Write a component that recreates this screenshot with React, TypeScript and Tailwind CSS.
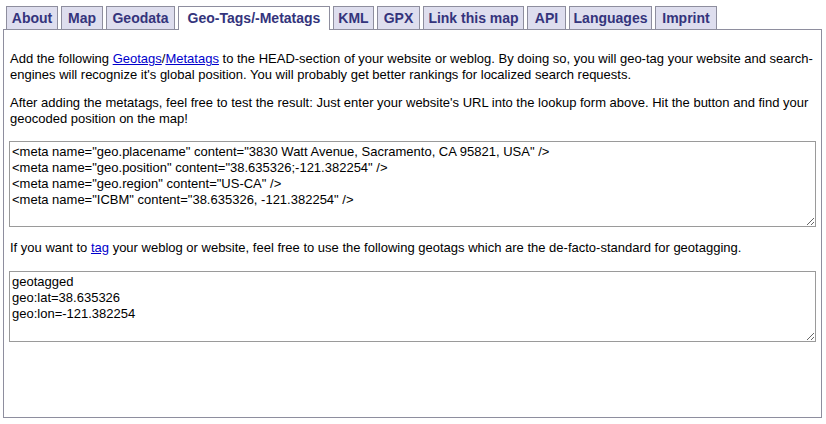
import React from "react";

const tabs: { label: string; w: string; active?: boolean }[] = [
  { label: "About", w: "w-[52px]" },
  { label: "Map", w: "w-[42px]" },
  { label: "Geodata", w: "w-[69px]" },
  { label: "Geo-Tags/-Metatags", w: "w-[152px]", active: true },
  { label: "KML", w: "w-[41px]" },
  { label: "GPX", w: "w-[43px]" },
  { label: "Link this map", w: "w-[101px]" },
  { label: "API", w: "w-[39px]" },
  { label: "Languages", w: "w-[83px]" },
  { label: "Imprint", w: "w-[62px]" },
];

const meta = `<meta name="geo.placename" content="3830 Watt Avenue, Sacramento, CA 95821, USA" />
<meta name="geo.position" content="38.635326;-121.382254" />
<meta name="geo.region" content="US-CA" />
<meta name="ICBM" content="38.635326, -121.382254" />`;

const geo = `geotagged
geo:lat=38.635326
geo:lon=-121.382254`;

export default function App() {
  return (
    <div className="w-[826px] h-[424px] bg-white text-black font-['Liberation_Sans',Arial,sans-serif] overflow-hidden">
      <div className="flex items-end gap-[3px] pl-[6px] pt-[6px]">
        {tabs.map((t) =>
          t.active ? (
            <div
              key={t.label}
              className={`${t.w} h-[24px] relative z-10 bg-white border border-b-0 border-[#8e8e9e] flex items-center justify-center text-[14px] font-bold text-[#34347c] whitespace-nowrap`}
            >
              {t.label}
            </div>
          ) : (
            <div
              key={t.label}
              className={`${t.w} h-[24px] bg-[#dedeee] border border-[#8e8e9e] flex items-center justify-center text-[14px] font-bold text-[#34347c] whitespace-nowrap`}
            >
              {t.label}
            </div>
          )
        )}
      </div>
      <div className="ml-[3px] w-[819px] h-[389px] -mt-px border border-[#8e8e9e] px-[5px] pt-[8px] text-[13px] leading-[16px]">
        <p className="mt-[13px] pl-px">
          Add the following{" "}
          <a href="#" className="text-[#0000cc] underline">Geotags</a>/
          <a href="#" className="text-[#0000cc] underline">Metatags</a> to the HEAD-section of your website or weblog. By doing so, you will geo-tag your website and search-engines will recognize it's global position. You will probably get better rankings for localized search requests.
        </p>
        <p className="mt-[12px] pl-px">
          After adding the metatags, feel free to test the result: Just enter your website's URL into the lookup form above. Hit the button and find your geocoded position on the map!
        </p>
        <textarea
          readOnly
          rows={5}
          defaultValue={meta}
          className="block mt-[14px] w-[807px] h-[86px] border border-[#9a9a9a] px-[2px] py-[2px] text-[13px] leading-[16px] font-['Liberation_Sans',Arial,sans-serif] resize outline-none"
        />
        <p className="mt-[13px] pl-px">
          If you want to <a href="#" className="text-[#0000cc] underline">tag</a> your weblog or website, feel free to use the following geotags which are the de-facto-standard for geotagging.
        </p>
        <textarea
          readOnly
          rows={4}
          defaultValue={geo}
          className="block mt-[15px] w-[807px] h-[71px] border border-[#9a9a9a] px-[2px] py-[2px] text-[13px] leading-[16px] font-['Liberation_Sans',Arial,sans-serif] resize outline-none"
        />
      </div>
    </div>
  );
}
